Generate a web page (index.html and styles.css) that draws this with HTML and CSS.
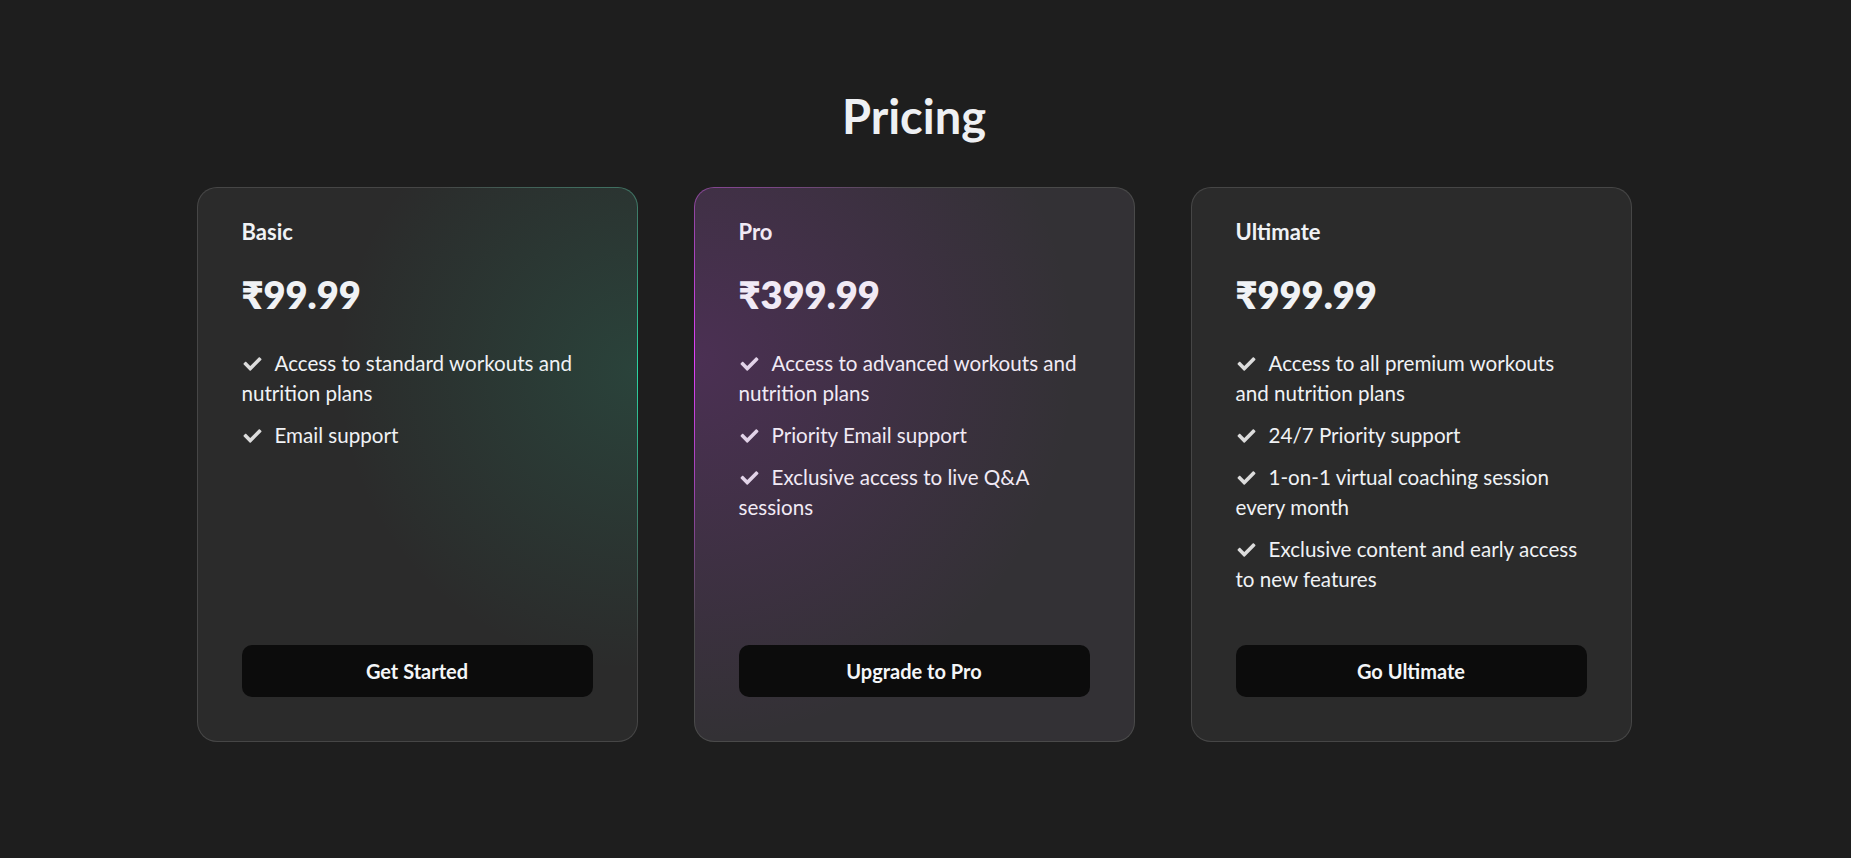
FILE: index.html
```html
<!DOCTYPE html>
<html lang="en">
<head>
<meta charset="utf-8">
<title>Pricing</title>
<link rel="stylesheet" href="styles.css">
</head>
<body>
<section class="pricing">
  <h1 class="pricing-title">Pricing</h1>
  <div class="plans">
    <div class="plan plan-basic">
      <h3 class="plan-name">Basic</h3>
      <p class="plan-price">₹99.99</p>
      <ul class="features">
        <li><svg class="check" viewBox="0 0 512 512"><path d="M173.9 439.4l-166.4-166.4c-10-10-10-26.2 0-36.2l36.2-36.2c10-10 26.2-10 36.2 0L192 312.7 432.1 72.6c10-10 26.2-10 36.2 0l36.2 36.2c10 10 10 26.2 0 36.2l-294.4 294.4c-10 10-26.2 10-36.2 0z"/></svg>Access to standard workouts and nutrition plans</li>
        <li><svg class="check" viewBox="0 0 512 512"><path d="M173.9 439.4l-166.4-166.4c-10-10-10-26.2 0-36.2l36.2-36.2c10-10 26.2-10 36.2 0L192 312.7 432.1 72.6c10-10 26.2-10 36.2 0l36.2 36.2c10 10 10 26.2 0 36.2l-294.4 294.4c-10 10-26.2 10-36.2 0z"/></svg>Email support</li>
      </ul>
      <button class="plan-btn">Get Started</button>
    </div>
    <div class="plan plan-pro">
      <h3 class="plan-name">Pro</h3>
      <p class="plan-price">₹399.99</p>
      <ul class="features">
        <li><svg class="check" viewBox="0 0 512 512"><path d="M173.9 439.4l-166.4-166.4c-10-10-10-26.2 0-36.2l36.2-36.2c10-10 26.2-10 36.2 0L192 312.7 432.1 72.6c10-10 26.2-10 36.2 0l36.2 36.2c10 10 10 26.2 0 36.2l-294.4 294.4c-10 10-26.2 10-36.2 0z"/></svg>Access to advanced workouts and nutrition plans</li>
        <li><svg class="check" viewBox="0 0 512 512"><path d="M173.9 439.4l-166.4-166.4c-10-10-10-26.2 0-36.2l36.2-36.2c10-10 26.2-10 36.2 0L192 312.7 432.1 72.6c10-10 26.2-10 36.2 0l36.2 36.2c10 10 10 26.2 0 36.2l-294.4 294.4c-10 10-26.2 10-36.2 0z"/></svg>Priority Email support</li>
        <li><svg class="check" viewBox="0 0 512 512"><path d="M173.9 439.4l-166.4-166.4c-10-10-10-26.2 0-36.2l36.2-36.2c10-10 26.2-10 36.2 0L192 312.7 432.1 72.6c10-10 26.2-10 36.2 0l36.2 36.2c10 10 10 26.2 0 36.2l-294.4 294.4c-10 10-26.2 10-36.2 0z"/></svg>Exclusive access to live Q&amp;A sessions</li>
      </ul>
      <button class="plan-btn">Upgrade to Pro</button>
    </div>
    <div class="plan plan-ultimate">
      <h3 class="plan-name">Ultimate</h3>
      <p class="plan-price">₹999.99</p>
      <ul class="features">
        <li><svg class="check" viewBox="0 0 512 512"><path d="M173.9 439.4l-166.4-166.4c-10-10-10-26.2 0-36.2l36.2-36.2c10-10 26.2-10 36.2 0L192 312.7 432.1 72.6c10-10 26.2-10 36.2 0l36.2 36.2c10 10 10 26.2 0 36.2l-294.4 294.4c-10 10-26.2 10-36.2 0z"/></svg>Access to all premium workouts and nutrition plans</li>
        <li><svg class="check" viewBox="0 0 512 512"><path d="M173.9 439.4l-166.4-166.4c-10-10-10-26.2 0-36.2l36.2-36.2c10-10 26.2-10 36.2 0L192 312.7 432.1 72.6c10-10 26.2-10 36.2 0l36.2 36.2c10 10 10 26.2 0 36.2l-294.4 294.4c-10 10-26.2 10-36.2 0z"/></svg>24/7 Priority support</li>
        <li><svg class="check" viewBox="0 0 512 512"><path d="M173.9 439.4l-166.4-166.4c-10-10-10-26.2 0-36.2l36.2-36.2c10-10 26.2-10 36.2 0L192 312.7 432.1 72.6c10-10 26.2-10 36.2 0l36.2 36.2c10 10 10 26.2 0 36.2l-294.4 294.4c-10 10-26.2 10-36.2 0z"/></svg>1-on-1 virtual coaching session every month</li>
        <li><svg class="check" viewBox="0 0 512 512"><path d="M173.9 439.4l-166.4-166.4c-10-10-10-26.2 0-36.2l36.2-36.2c10-10 26.2-10 36.2 0L192 312.7 432.1 72.6c10-10 26.2-10 36.2 0l36.2 36.2c10 10 10 26.2 0 36.2l-294.4 294.4c-10 10-26.2 10-36.2 0z"/></svg>Exclusive content and early access to new features</li>
      </ul>
      <button class="plan-btn">Go Ultimate</button>
    </div>
  </div>
</section>
</body>
</html>
```
FILE: styles.css
```css
* { box-sizing: border-box; }

html, body {
  margin: 0;
  background: #1e1e1e;
}

body {
  font-family: Lato, "Noto Sans", "DejaVu Sans", sans-serif;
  color: #f0f2f5;
  height: 858px;
  overflow: hidden;
}

.pricing {
  padding: 88px 23px 0 0;
  display: flex;
  flex-direction: column;
  align-items: center;
}

.pricing-title {
  margin: 0 0 43px;
  font-size: 47px;
  line-height: 1.2;
  font-weight: 700;
  color: #eef0f3;
}

.plans {
  display: grid;
  grid-template-columns: repeat(3, 441px);
  gap: 56px;
}

.plan {
  display: flex;
  flex-direction: column;
  border: 1px solid transparent;
  border-radius: 20px;
  padding: 31px 44px 44px;
  background:
    linear-gradient(#2b2b2b, #2b2b2b) padding-box,
    linear-gradient(#464646, #464646) border-box;
}

.plan-basic {
  background:
    radial-gradient(circle 300px at 100% 33%, rgba(38, 175, 130, 0.18), rgba(38, 175, 130, 0) 100%) padding-box,
    linear-gradient(#2b2b2b, #2b2b2b) padding-box,
    radial-gradient(circle 270px at 100% 33%, #2ad6a2 0%, #3b8d74 45%, #464646 100%) border-box;
}

.plan-pro {
  background:
    radial-gradient(circle 380px at 0% 31%, rgba(140, 45, 165, 0.27), rgba(140, 45, 165, 0) 100%) padding-box,
    linear-gradient(#333135, #333135) padding-box,
    radial-gradient(circle 270px at 0% 31%, #e23ffb 0%, #a044b4 45%, #4a4a4a 100%) border-box;
  color: #f1eaf5;
}

.plan-name {
  margin: 0;
  font-size: 22px;
  line-height: 1.2;
  font-weight: 700;
}

.plan-price {
  margin: 26px 0 0;
  font-size: 38px;
  line-height: 1.2;
  font-weight: 800;
}

.features {
  list-style: none;
  margin: 31px 0 51px;
  padding: 0;
  display: flex;
  flex-direction: column;
  gap: 12px;
}

.features li {
  font-size: 20.6px;
  line-height: 30px;
}

.check {
  width: 21px;
  height: 18px;
  margin-right: 12px;
  vertical-align: -2px;
  fill: #dcdcdc;
}

.plan-pro .check {
  fill: #e2d3e8;
}

.plan-btn {
  margin-top: auto;
  height: 52px;
  width: 100%;
  border: 0;
  border-radius: 10px;
  background: #0c0c0c;
  color: #f4f6f8;
  font-family: inherit;
  font-size: 20px;
  font-weight: 700;
}
```
